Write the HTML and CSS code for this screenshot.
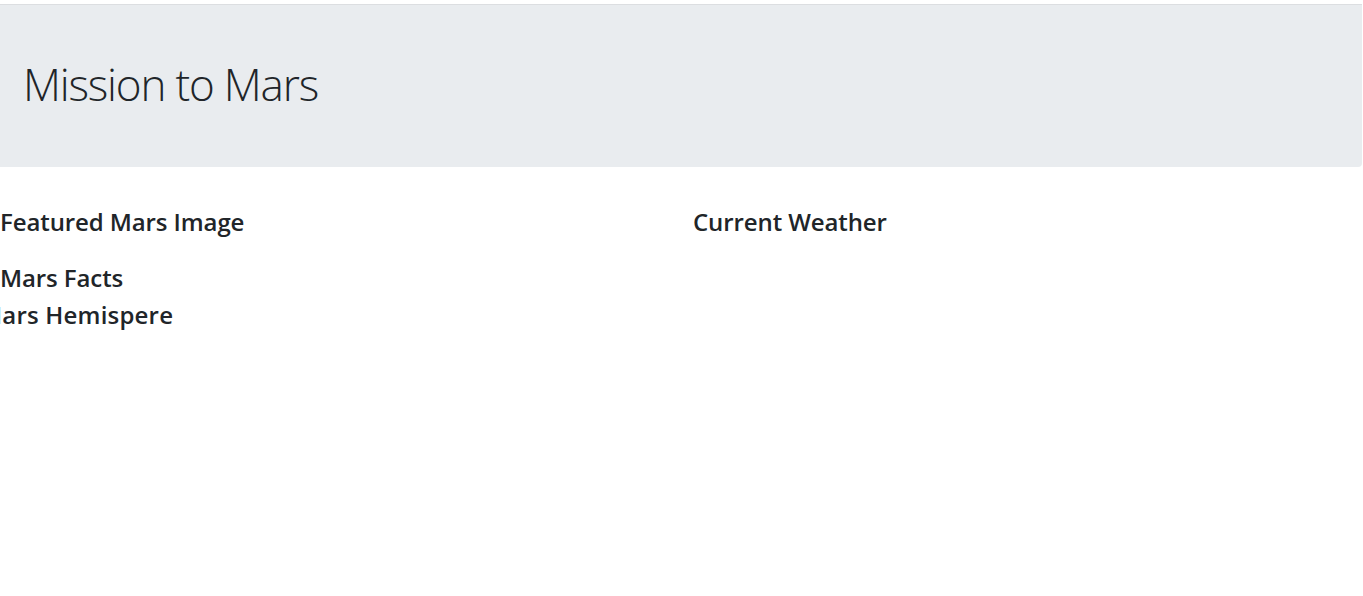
FILE: index.html
```html
<!DOCTYPE html>
<html lang="en">
<head>
<meta charset="utf-8">
<title>Mission to Mars</title>
<link rel="stylesheet" href="styles.css">
</head>
<body>
<div class="page">
  <header class="jumbotron">
    <h1 class="title">Mission to Mars</h1>
  </header>
  <section class="row">
    <div class="col">
      <h4 class="heading">Featured Mars Image</h4>
    </div>
    <div class="col">
      <h4 class="heading">Current Weather</h4>
    </div>
  </section>
  <section class="facts">
    <h4 class="heading">Mars Facts</h4>
  </section>
  <section class="hemi">
    <h4 class="heading">Mars Hemispere</h4>
  </section>
</div>
</body>
</html>
```

FILE: styles.css
```css
html, body {
  margin: 0;
  padding: 0;
  background: #fff;
}
body {
  font-family: "Open Sans", "Noto Sans", sans-serif;
  color: #212529;
  overflow: hidden;
}
.page {
  padding-top: 4px;
  width: 1363px;
}
.jumbotron {
  box-sizing: border-box;
  width: 1362px;
  height: 163px;
  background: #e9ecef;
  border-top: 1px solid #dcdee1;
  border-bottom-right-radius: 4px;
  display: flex;
  align-items: center;
  padding: 0 23px 3px 23px;
}
.title {
  margin: 0;
  font-weight: 300;
  font-size: 44px;
  line-height: 1.2;
  letter-spacing: -1.2px;
}
.row {
  display: grid;
  grid-template-columns: 693px 1fr;
  margin-top: 41px;
}
.heading {
  margin: 0 0 8px 0;
  font-size: 24px;
  font-weight: 600;
  line-height: 1.2;
  letter-spacing: -0.1px;
}
.facts {
  margin-top: 19px;
}
.hemi {
  margin-left: -20px;
}
.hemi .heading {
  letter-spacing: 0.2px;
}
```
